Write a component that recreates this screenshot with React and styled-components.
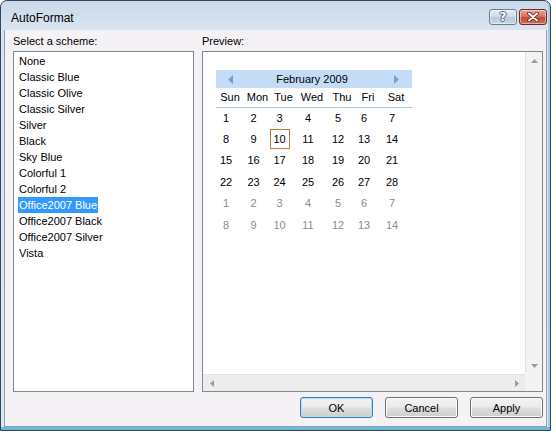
import React from 'react'
import styled, { createGlobalStyle } from 'styled-components'

const GlobalStyle = createGlobalStyle`
  html, body {
    margin: 0;
    padding: 0;
    background: #ffffff;
  }
  body {
    font-family: "Liberation Sans", Arial, sans-serif;
    font-size: 11px;
    color: #000;
  }
`

const Window = styled.div`
  box-sizing: border-box;
  width: 551px;
  height: 431px;
  border: 1px solid #34475c;
  border-radius: 7px 7px 0 0;
  padding: 0 3px 3px 3px;
  background: linear-gradient(to bottom, #c9d9ea 0px, #d9e4f0 28px, #dce6f1 100%);
  box-shadow: inset 0 -3px 0 #6db8d4, inset -2px 0 0 #a9cee4;
  display: flex;
  flex-direction: column;
`

const TitleBar = styled.div`
  height: 29px;
  display: flex;
  align-items: flex-start;
  flex-shrink: 0;
`

const Title = styled.div`
  flex: 1;
  padding: 10px 0 0 7px;
  font-size: 12px;
  line-height: 15px;
  color: #000;
`

const CaptionButtons = styled.div`
  display: flex;
  gap: 2px;
  margin-top: 8px;
`

const CaptionButton = styled.div`
  box-sizing: border-box;
  width: 28px;
  height: 16px;
  border-radius: 3px;
  display: flex;
  align-items: center;
  justify-content: center;
  border: 1px solid ${p => (p.$close ? '#6e2a22' : '#6c7e93')};
  background: ${p =>
    p.$close
      ? 'linear-gradient(to bottom, #e8a796 0%, #d67562 45%, #c24a35 55%, #d0705c 100%)'
      : 'linear-gradient(to bottom, #e6eef7 0%, #cfdcea 45%, #b7c9dc 55%, #c9d8e8 100%)'};
  box-shadow: inset 0 0 0 1px rgba(255, 255, 255, 0.45);
`

const HelpGlyph = styled.span`
  font-family: "DejaVu Sans", sans-serif;
  font-weight: bold;
  font-size: 12px;
  line-height: 14px;
  color: #f7f9fc;
  text-shadow: 1px 0 0 #56677d, -1px 0 0 #56677d, 0 1px 0 #56677d, 0 -1px 0 #56677d;
`

const Client = styled.div`
  flex: 1;
  background: #f4f2f4;
  border: 1px solid #8d9fb4;
  border-top: none;
  padding: 5px 3px 0 8px;
  display: flex;
  flex-direction: column;
`

const Panels = styled.div`
  display: grid;
  grid-template-columns: 181px 341px;
  grid-template-rows: 16px 341px;
  column-gap: 8px;
`

const Label = styled.div`
  line-height: 13px;
  color: #000;
`

const ListBox = styled.div`
  box-sizing: border-box;
  border: 1px solid #828790;
  background: #fff;
  padding-top: 1px;
`

const ListItem = styled.div`
  height: 16px;
  line-height: 16px;
  padding-left: 4px;
  white-space: nowrap;
`

const ItemText = styled.span`
  display: inline-block;
  padding: 0 1px;
  background: ${p => (p.$selected ? '#3399ff' : 'transparent')};
  color: ${p => (p.$selected ? '#fff' : '#000')};
`

const PreviewBox = styled.div`
  box-sizing: border-box;
  border: 1px solid #828790;
  background: #fff;
  display: grid;
  grid-template-columns: 1fr 17px;
  grid-template-rows: 1fr 17px;
`

const PreviewArea = styled.div`
  padding: 18px 0 0 13px;
  overflow: hidden;
`

const VScroll = styled.div`
  background: #f3f3f3;
  border-left: 1px solid #e4e4e4;
  display: flex;
  flex-direction: column;
  justify-content: space-between;
`

const HScroll = styled.div`
  background: #ededed;
  border-top: 1px solid #e2e2e2;
  display: flex;
  justify-content: space-between;
`

const ScrollCorner = styled.div`
  background: #f3f3f3;
`

const ArrowCell = styled.div`
  width: 17px;
  height: 17px;
  display: flex;
  align-items: center;
  justify-content: center;
`

const Calendar = styled.div`
  width: 196px;
`

const MonthBar = styled.div`
  height: 18px;
  background: #c5dcf7;
  display: grid;
  grid-template-columns: 28px 1fr 32px;
  align-items: center;
  justify-items: center;
`

const MonthName = styled.div`
  line-height: 18px;
`

const WeekHeader = styled.div`
  display: grid;
  grid-template-columns: 28px 27px 25px 32px 28px 24px 32px;
  height: 19px;
  line-height: 19px;
  border-bottom: 1px solid #a9c9ea;
  text-align: center;
`

const DaysGrid = styled.div`
  display: grid;
  grid-template-columns: 28px 27px 25px 32px 28px 24px 32px;
  grid-auto-rows: 21.4px;
  margin-top: -1px;
`

const DayCell = styled.div`
  display: flex;
  align-items: center;
  justify-content: center;
  padding-right: 8px;
  color: ${p => (p.$other ? '#8c8c8c' : '#000')};
`

const DayNum = styled.span`
  box-sizing: border-box;
  min-width: 20px;
  height: 20px;
  display: flex;
  align-items: center;
  justify-content: center;
  border: 1px solid ${p => (p.$today ? '#b77a3d' : 'transparent')};
`

const ButtonRow = styled.div`
  display: flex;
  justify-content: flex-end;
  gap: 12px;
  margin-top: 5px;
`

const Button = styled.button`
  box-sizing: border-box;
  width: 73px;
  height: 21px;
  padding: 0;
  border: 1px solid ${p => (p.$default ? '#3c7fb1' : '#707070')};
  border-radius: 3px;
  background: linear-gradient(to bottom, #f3f3f3 0%, #ebebeb 48%, #dddddd 52%, #cfcfcf 100%);
  box-shadow: inset 0 0 0 1px ${p => (p.$default ? '#b5dcf2' : '#fbfbfb')};
  font-family: "Liberation Sans", Arial, sans-serif;
  font-size: 11px;
  color: #000;
`

function Arrow({ dir, color = '#9a9a9a', w = 7, h = 4 }) {
  const horizontal = dir === 'left' || dir === 'right'
  const sw = horizontal ? h : w
  const sh = horizontal ? w : h
  let pts
  if (dir === 'up') pts = `0,${sh} ${sw / 2},0 ${sw},${sh}`
  else if (dir === 'down') pts = `0,0 ${sw},0 ${sw / 2},${sh}`
  else if (dir === 'left') pts = `${sw},0 ${sw},${sh} 0,${sh / 2}`
  else pts = `0,0 ${sw},${sh / 2} 0,${sh}`
  return (
    <svg width={sw} height={sh} viewBox={`0 0 ${sw} ${sh}`}>
      <polygon points={pts} fill={color} />
    </svg>
  )
}

const schemes = [
  'None',
  'Classic Blue',
  'Classic Olive',
  'Classic Silver',
  'Silver',
  'Black',
  'Sky Blue',
  'Colorful 1',
  'Colorful 2',
  'Office2007 Blue',
  'Office2007 Black',
  'Office2007 Silver',
  'Vista',
]

const weekDays = ['Sun', 'Mon', 'Tue', 'Wed', 'Thu', 'Fri', 'Sat']

// February 2009 starts on a Sunday, followed by the first two weeks of March
const days = [
  ...Array.from({ length: 28 }, (_, i) => ({ n: i + 1, other: false })),
  ...Array.from({ length: 14 }, (_, i) => ({ n: i + 1, other: true })),
]

export default function App() {
  return (
    <>
      <GlobalStyle />
      <Window>
        <TitleBar>
          <Title>AutoFormat</Title>
          <CaptionButtons>
            <CaptionButton>
              <HelpGlyph>?</HelpGlyph>
            </CaptionButton>
            <CaptionButton $close>
              <svg width="12" height="10" viewBox="0 0 12 10">
                <path d="M2 1.5 L10 8.5 M10 1.5 L2 8.5" stroke="#5b1c14" strokeWidth="3.6" strokeLinecap="round" />
                <path d="M2 1.5 L10 8.5 M10 1.5 L2 8.5" stroke="#ffffff" strokeWidth="2.1" strokeLinecap="round" />
              </svg>
            </CaptionButton>
          </CaptionButtons>
        </TitleBar>
        <Client>
          <Panels>
            <Label>Select a scheme:</Label>
            <Label>Preview:</Label>
            <ListBox>
              {schemes.map(name => (
                <ListItem key={name}>
                  <ItemText $selected={name === 'Office2007 Blue'}>{name}</ItemText>
                </ListItem>
              ))}
            </ListBox>
            <PreviewBox>
              <PreviewArea>
                <Calendar>
                  <MonthBar>
                    <Arrow dir="left" color="#7a9fcc" w={9} h={5} />
                    <MonthName>February 2009</MonthName>
                    <Arrow dir="right" color="#7a9fcc" w={9} h={5} />
                  </MonthBar>
                  <WeekHeader>
                    {weekDays.map(d => (
                      <div key={d}>{d}</div>
                    ))}
                  </WeekHeader>
                  <DaysGrid>
                    {days.map((d, i) => (
                      <DayCell key={i} $other={d.other}>
                        <DayNum $today={!d.other && d.n === 10}>{d.n}</DayNum>
                      </DayCell>
                    ))}
                  </DaysGrid>
                </Calendar>
              </PreviewArea>
              <VScroll>
                <ArrowCell>
                  <Arrow dir="up" />
                </ArrowCell>
                <ArrowCell>
                  <Arrow dir="down" />
                </ArrowCell>
              </VScroll>
              <HScroll>
                <ArrowCell>
                  <Arrow dir="left" />
                </ArrowCell>
                <ArrowCell>
                  <Arrow dir="right" />
                </ArrowCell>
              </HScroll>
              <ScrollCorner />
            </PreviewBox>
          </Panels>
          <ButtonRow>
            <Button $default>OK</Button>
            <Button>Cancel</Button>
            <Button>Apply</Button>
          </ButtonRow>
        </Client>
      </Window>
    </>
  )
}
